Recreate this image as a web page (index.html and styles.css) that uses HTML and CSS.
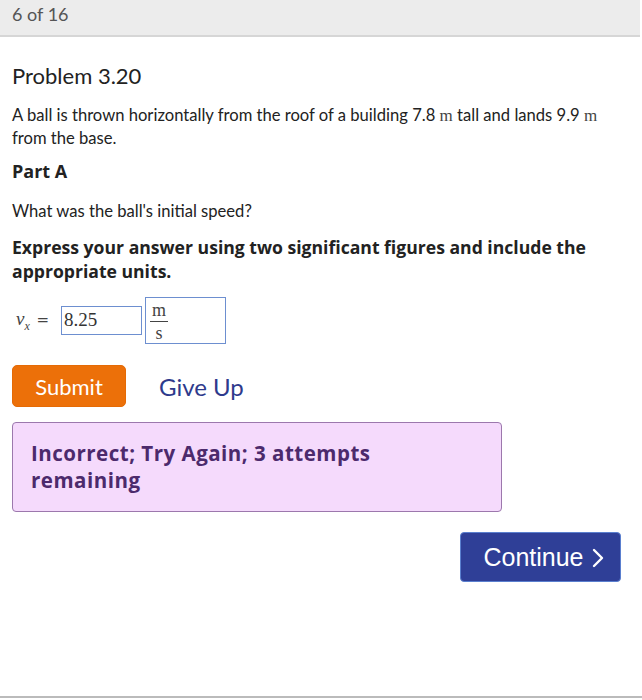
FILE: index.html
```html
<!DOCTYPE html>
<html lang="en">
<head>
    <meta charset="UTF-8">
    <meta name="viewport" content="width=device-width, initial-scale=1.0">
    <title>Problem 3.20</title>
    <link rel="stylesheet" href="styles.css">
</head>
<body>
    <div class="topbar">6 of 16</div>

    <div class="content">
        <h1>Problem 3.20</h1>
        <p class="intro">A ball is thrown horizontally from the roof of a building 7.8 <span class="unit">m</span> tall and lands 9.9 <span class="unit">m</span> from the base.</p>

        <h2>Part A</h2>
        <p class="question">What was the ball's initial speed?</p>
        <p class="instruct">Express your answer using two significant figures and include the appropriate units.</p>

        <div class="answer-row">
            <span class="var"><i>v</i><sub><i>x</i></sub> <span class="eq">=</span></span>
            <div class="value-box">8.25</div>
            <div class="units-box">
                <span class="frac"><span class="num">m</span><span class="den">s</span></span>
            </div>
        </div>

        <div class="actions">
            <button class="submit">Submit</button>
            <a class="give-up" href="#">Give Up</a>
        </div>

        <div class="feedback">Incorrect; Try Again; 3 attempts remaining</div>

        <div class="continue-wrap">
            <button class="continue">Continue
                <svg class="chev" width="12" height="20" viewBox="0 0 12 20"><path d="M2 2 L10 10 L2 18" fill="none" stroke="#fff" stroke-width="2.4" stroke-linecap="round" stroke-linejoin="round"/></svg>
            </button>
        </div>
    </div>

    <div class="bottom-line"></div>
</body>
</html>
```

FILE: styles.css
```css
* {
    margin: 0;
    padding: 0;
    box-sizing: border-box;
}

body {
    width: 642px;
    height: 700px;
    background: #fff;
    color: #222;
    font-family: Lato, "Open Sans", sans-serif;
    display: flex;
    flex-direction: column;
}

.topbar {
    width: 640px;
    height: 37px;
    background: #ececec;
    border-bottom: 2px solid #d6d6d6;
    color: #555;
    font-size: 18px;
    padding: 3px 0 0 12px;
}

.content {
    flex: 1;
    padding: 24px 21px 0 12px;
}

h1 {
    font-size: 22px;
    font-weight: normal;
    color: #222;
    line-height: 30px;
    margin-bottom: 13px;
}

.intro {
    font-size: 16.6px;
    line-height: 23px;
    color: #222;
    padding-right: 9px;
}

.unit {
    font-family: "Liberation Serif", serif;
    font-size: 17px;
    color: #444;
}

h2 {
    font-family: "Open Sans", sans-serif;
    font-size: 18px;
    font-weight: bold;
    line-height: 24px;
    margin-top: 9px;
}

.question {
    font-size: 16.6px;
    line-height: 22px;
    margin-top: 17px;
}

.instruct {
    font-family: "Open Sans", sans-serif;
    font-size: 17.6px;
    font-weight: bold;
    line-height: 24px;
    margin-top: 13px;
    color: #222;
}

.answer-row {
    display: flex;
    align-items: center;
    margin-top: 14px;
    font-family: "Liberation Serif", serif;
}

.var {
    font-family: "Liberation Serif", serif;
    font-size: 19px;
    color: #444;
    margin-left: 4px;
    width: 45px;
}

.var sub {
    font-size: 12px;
}

.eq {
    font-family: "DejaVu Sans", sans-serif;
    font-size: 15px;
    margin-left: 2px;
}

.value-box {
    width: 81px;
    height: 29px;
    border: 1px solid #6d8fd0;
    font-size: 19px;
    color: #333;
    padding: 2px 0 0 2px;
}

.units-box {
    width: 81px;
    height: 47px;
    border: 1px solid #6d8fd0;
    margin-left: 3px;
    padding: 2px 0 0 4px;
}

.frac {
    display: inline-flex;
    flex-direction: column;
    align-items: center;
    font-size: 18px;
    color: #444;
    line-height: 20px;
}

.num {
    border-bottom: 1px solid #444;
    padding: 0 2px 1px;
}

.den {
    padding-top: 1px;
}

.actions {
    display: flex;
    align-items: center;
    margin-top: 21px;
}

.submit {
    width: 114px;
    height: 42px;
    background: #ec7009;
    color: #fff;
    border: 1px solid #e56a05;
    border-radius: 5px;
    font-family: Lato, sans-serif;
    font-size: 22px;
    cursor: pointer;
}

.give-up {
    margin-left: 33px;
    color: #2e3a8c;
    font-size: 24px;
    text-decoration: none;
}

.feedback {
    width: 490px;
    height: 90px;
    margin-top: 15px;
    background: #f5dafc;
    border: 1px solid #9c78ad;
    border-radius: 4px;
    color: #4c2a6c;
    font-family: "Open Sans", sans-serif;
    font-size: 20.5px;
    font-weight: bold;
    letter-spacing: 0.5px;
    line-height: 27px;
    padding: 17px 100px 0 18px;
}

.continue-wrap {
    display: flex;
    justify-content: flex-end;
    margin-top: 20px;
}

.continue {
    width: 161px;
    height: 50px;
    background: #2f3f97;
    color: #fff;
    border: 1px solid #5a7fcf;
    border-radius: 4px;
    font-family: "Liberation Sans", Arial, sans-serif;
    font-size: 25px;
    display: flex;
    align-items: center;
    justify-content: center;
    gap: 8px;
    padding-left: 6px;
    cursor: pointer;
}

.chev {
    margin-top: 2px;
}

.bottom-line {
    height: 2px;
    background: #bbb;
    margin-bottom: 2px;
}
```
